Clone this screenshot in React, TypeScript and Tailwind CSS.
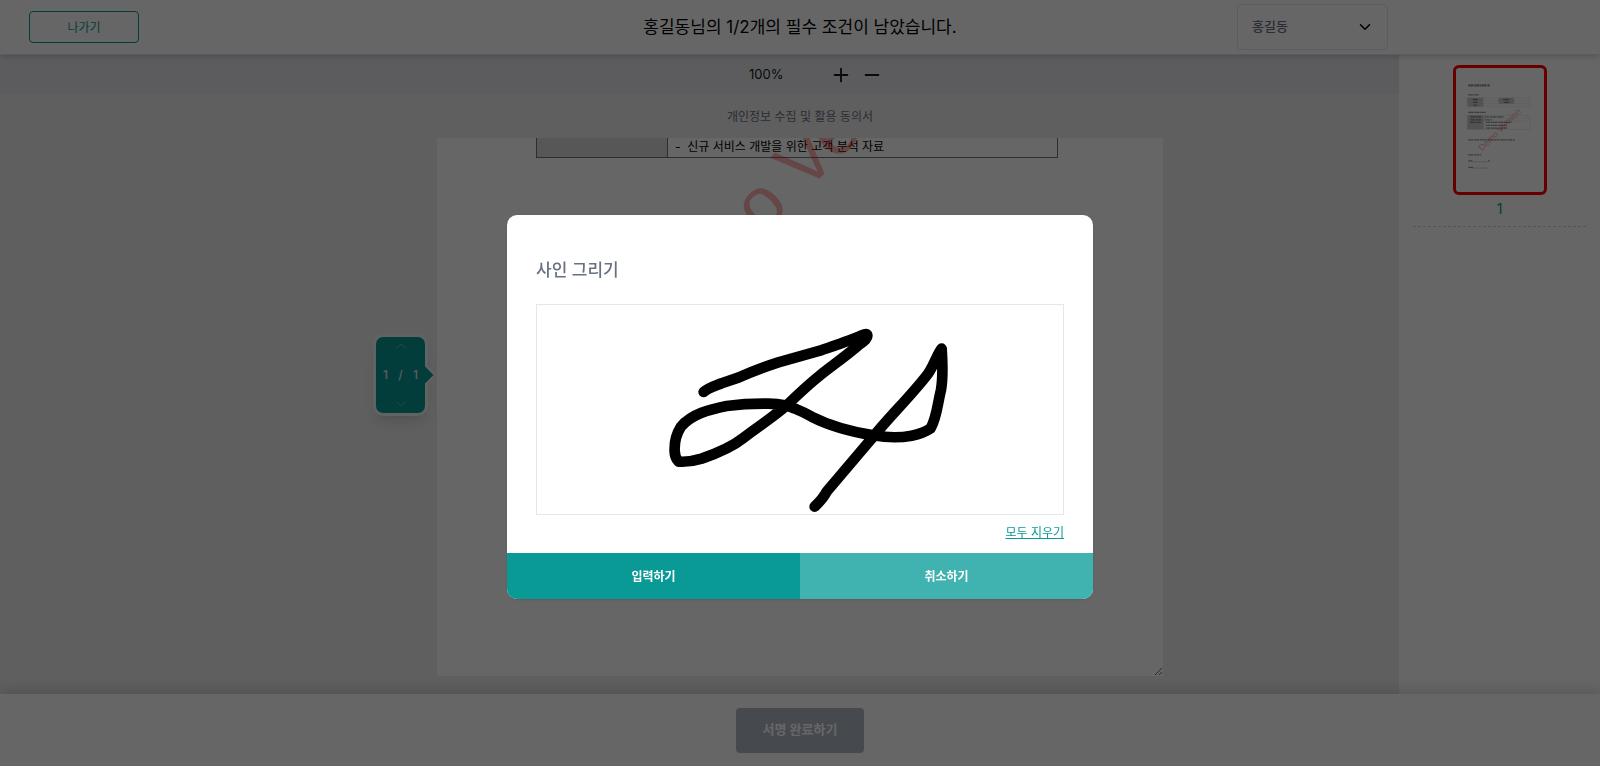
import { ChevronDown, ChevronUp, Minus, Plus } from "lucide-react";

function Header() {
  return (
    <header className="relative z-10 grid h-[55px] shrink-0 grid-cols-[1fr_auto_1fr] items-center border-b border-gray-200 bg-white shadow-md">
      <button
        type="button"
        className="ml-[29px] h-8 w-[110px] justify-self-start rounded border border-[#099a95] pt-0.5 text-xs text-[#099a95]"
      >
        나가기
      </button>
      <h1 className="pt-0.5 text-[17px] text-black">홍길동님의 1/2개의 필수 조건이 남았습니다.</h1>
      <div className="relative mr-[212px] w-[151px] justify-self-end">
        <select
          aria-label="서명자"
          className="h-[46px] w-full appearance-none rounded border border-gray-200 bg-white pr-8 pl-[14px] text-[13px] font-medium text-gray-500"
        >
          <option>홍길동</option>
        </select>
        <ChevronDown className="pointer-events-none absolute top-[14px] right-[14px] size-[18px] text-black" />
      </div>
    </header>
  );
}

function Toolbar() {
  return (
    <div className="flex h-[39px] shrink-0 items-center justify-center bg-[#e5e7eb] pl-[233px] text-gray-900">
      <span className="w-[81px] text-[13px]">100%</span>
      <button type="button" aria-label="확대" className="mr-[9px] p-0">
        <Plus className="size-[22px]" strokeWidth={2} />
      </button>
      <button type="button" aria-label="축소" className="p-0">
        <Minus className="size-[22px]" strokeWidth={2} />
      </button>
    </div>
  );
}

function Pager() {
  return (
    <nav
      aria-label="페이지 이동"
      className="absolute top-[196px] right-full mr-[9px] flex h-[82px] w-[55px] flex-col items-center justify-between rounded-[10px] border-[3px] border-gray-100 bg-[#099a95] py-px text-white shadow-lg"
    >
      <button type="button" aria-label="이전">
        <ChevronUp className="size-4 opacity-50" strokeWidth={1} />
      </button>
      <span className="flex w-full justify-between px-[7px] text-xs font-medium text-gray-200">
        <span>1</span>
        <span>/</span>
        <span>1</span>
      </span>
      <button type="button" aria-label="다음">
        <ChevronDown className="size-4 opacity-50" strokeWidth={1} />
      </button>
      <svg viewBox="0 0 12 22" className="absolute top-[27px] -right-3 h-[22px] w-3" aria-hidden="true">
        <path d="M0 1 L10 11 L0 21 Z" fill="#099a95" />
        <path d="M0 1 L10 11 L0 21" fill="none" stroke="#f3f4f6" strokeWidth="2" />
      </svg>
    </nav>
  );
}

function Document() {
  return (
    <div className="relative flex w-[726px] flex-1 flex-col">
      <div className="relative flex-1 resize overflow-hidden bg-white pl-[99px]">
        <table className="w-[522px] border-collapse text-xs text-black">
          <tbody>
            <tr className="h-[19px]">
              <td className="w-[131px] border border-t-0 border-neutral-500 bg-[#d9d9d9] p-0" />
              <td className="border border-t-0 border-neutral-500 p-0 pl-[7px] leading-4">
                -&nbsp; 신규 서비스 개발을 위한 고객 분석 자료
              </td>
            </tr>
          </tbody>
        </table>
        <svg
          viewBox="0 0 600 520"
          className="pointer-events-none absolute top-0 left-0 h-[520px] w-[600px]"
        >
          <text
            transform="translate(218 205) rotate(-45)"
            fontSize="72"
            fontFamily="Liberation Sans, sans-serif"
            fill="#ff0000"
            opacity="0.3"
          >
            Demo Version
          </text>
        </svg>
      </div>
      <Pager />
    </div>
  );
}

function TextStroke({ x, y, w, h = 4 }: { x: number; y: number; w: number; h?: number }) {
  return (
    <line x1={x} x2={x + w} y1={y} y2={y} stroke="#444" strokeWidth={h} strokeDasharray="5 1 8 2 3 1" opacity="0.6" />
  );
}

function Thumbnail() {
  return (
    <svg viewBox="0 0 267 378" className="h-full w-full" aria-hidden="true">
      <TextStroke x={37} y={53} w={66} h={7} />
      <TextStroke x={37} y={82} w={31} />
      <rect x="34" y="91" width="48" height="27" fill="#ccc" />
      <rect x="129" y="91" width="48" height="18" fill="#ccc" />
      <path d="M34 91H225V118H34Z M34 100H225 M34 109H225 M82 91V118" fill="none" stroke="#ccc" strokeWidth="1" />
      <TextStroke x={51} y={96} w={14} />
      <TextStroke x={51} y={105} w={14} />
      <TextStroke x={53} y={113} w={10} />
      <TextStroke x={143} y={96} w={20} />
      <TextStroke x={146} y={105} w={14} />
      <TextStroke x={37} y={135} w={53} />
      <rect x="34" y="144" width="50" height="43" fill="#ccc" />
      <path d="M34 144H225V187H34Z M34 153H225 M34 162H225 M84 144V187" fill="none" stroke="#ccc" strokeWidth="1" />
      <TextStroke x={43} y={149} w={33} />
      <TextStroke x={43} y={158} w={33} />
      <TextStroke x={43} y={166} w={33} />
      <TextStroke x={87} y={149} w={58} />
      <TextStroke x={87} y={158} w={22} />
      <TextStroke x={90} y={166} w={78} />
      <TextStroke x={90} y={175} w={64} />
      <TextStroke x={90} y={183} w={66} />
      <TextStroke x={37} y={219} w={142} />
      <TextStroke x={37} y={265} w={40} />
      <TextStroke x={37} y={283} w={12} />
      <TextStroke x={97} y={283} w={6} />
      <TextStroke x={37} y={303} w={14} />
      <path d="M49 286H95 M51 305H95" stroke="#777" strokeWidth="1" />
      <text
        transform="translate(79 254) rotate(-45)"
        fontSize="27"
        fontFamily="Liberation Sans, sans-serif"
        fill="#ff0000"
        opacity="0.35"
      >
        Demo Version
      </text>
    </svg>
  );
}

function Sidebar() {
  return (
    <aside className="flex w-[201px] shrink-0 flex-col items-center bg-white px-[14px] pt-[10px]">
      <button
        type="button"
        aria-label="1 페이지"
        className="h-[130px] w-[94px] rounded-md border-[3px] border-[#ff0000]"
      >
        <Thumbnail />
      </button>
      <div className="w-full border-b border-dashed border-gray-300 pt-1 pb-[7px] text-center text-sm text-[#099a95]">
        1
      </div>
    </aside>
  );
}

function SignatureDialog() {
  return (
    <div className="fixed inset-0 z-20 flex items-start justify-center bg-black/60 pt-[215px]">
      <section
        role="dialog"
        aria-modal="true"
        aria-labelledby="signature-title"
        className="w-[586px] overflow-hidden rounded-[10px] bg-white shadow-sm"
      >
        <div className="px-[29px] pt-[41px]">
          <h2 id="signature-title" className="text-[17px] leading-7 font-medium text-gray-500">
            사인 그리기
          </h2>
          <svg
            viewBox="0 0 526 209"
            role="img"
            aria-label="서명"
            className="mt-5 h-[211px] w-full border border-gray-200"
          >
            <path
              transform="translate(103 5) scale(0.3333)"
              d="M191 246 C205 234 225 228 245 220 L295 203 C335 185 375 170 415 157 L540 122 C580 108 640 88 665 76 Q683 68 682 77 Q684 88 655 106 C620 136 570 172 540 196 C500 228 465 262 440 286 C400 322 350 352 310 384 C280 408 225 432 185 446 Q150 457 116 455 Q102 440 104 415 Q104 380 123 350 C155 312 210 298 260 288 Q320 280 385 281 Q440 283 465 296 Q490 306 515 320 C580 353 640 366 700 376 C740 383 780 384 815 377 Q850 370 872 355 C890 325 893 280 903 240 C910 200 908 160 905 116 C892 132 882 165 865 190 C820 250 750 318 700 380 L560 545 Q550 565 524 590"
              fill="none"
              stroke="#000"
              strokeWidth="32"
              strokeLinecap="round"
              strokeLinejoin="round"
            />
          </svg>
          <div className="flex h-[38px] items-center justify-end">
            <button type="button" className="pb-0.5 text-xs text-[#099a95] underline">
              모두 지우기
            </button>
          </div>
        </div>
        <div className="grid h-[46px] grid-cols-2 text-xs font-bold text-white">
          <button type="button" className="bg-[#099a95] pt-0.5">
            입력하기
          </button>
          <button type="button" className="bg-[#40b2af] pt-0.5">
            취소하기
          </button>
        </div>
      </section>
    </div>
  );
}

export default function App() {
  return (
    <div className="flex min-h-screen flex-col bg-white font-['Inter','Noto_Sans_CJK_KR',sans-serif]">
      <Header />
      <div className="flex flex-1">
        <main className="flex flex-1 flex-col bg-[#eeeeee]">
          <Toolbar />
          <div className="flex flex-1 flex-col items-center pb-[18px] pl-[201px]">
            <p className="pt-[13px] pb-[11px] text-xs leading-5 text-gray-500">개인정보 수집 및 활용 동의서</p>
            <Document />
          </div>
        </main>
        <Sidebar />
      </div>
      <footer className="relative flex h-[72px] shrink-0 items-center justify-center bg-white shadow-[0_-4px_12px_rgba(0,0,0,0.15)]">
        <button type="button" className="h-[45px] w-32 rounded bg-[#b0b7c3] text-[13px] font-bold text-white" disabled>
          서명 완료하기
        </button>
      </footer>
      <SignatureDialog />
    </div>
  );
}
